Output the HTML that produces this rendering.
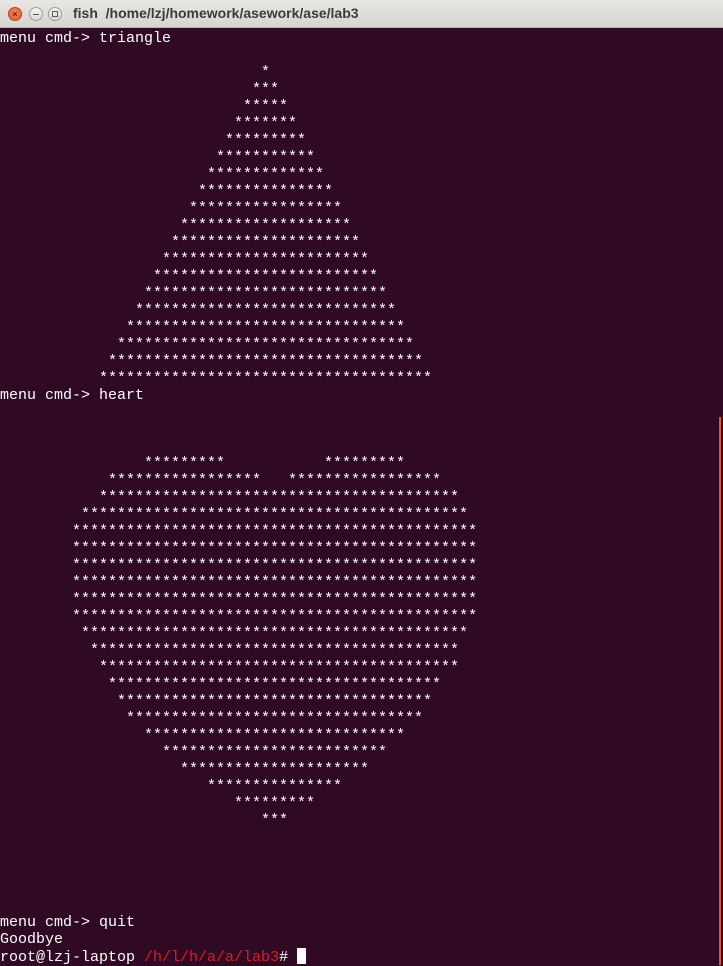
<!DOCTYPE html>
<html><head><meta charset="utf-8"><style>
html,body{margin:0;padding:0;width:723px;height:965px;overflow:hidden;background:#300a24;}
#tb{position:absolute;left:0;top:0;width:723px;height:28px;background:linear-gradient(#e8e7e3,#d6d5d0);border-bottom:1px solid #b8b6b0;box-sizing:border-box;}
.btn{position:absolute;top:7px;width:14px;height:14px;border-radius:50%;box-sizing:border-box;}
#close{left:8px;background:radial-gradient(circle at 50% 40%,#f58a5f,#e2531f);border:1px solid #b8451c;color:#6a1e06;font:bold 9px "Liberation Sans",sans-serif;text-align:center;line-height:12px;}
#min{left:29px;background:linear-gradient(#f5f4f2,#d8d7d3);border:1px solid #9e9d99;}
#max{left:48px;background:linear-gradient(#f5f4f2,#d8d7d3);border:1px solid #9e9d99;}
#min:after{content:"";position:absolute;left:3px;top:6px;width:6px;height:1px;background:#5a5a58;}
#max:after{content:"";position:absolute;left:3px;top:3px;width:4px;height:4px;border:1px solid #5a5a58;}
#title{position:absolute;left:73px;top:5px;font:bold 14px "Liberation Sans",sans-serif;color:#3c3b37;white-space:pre;}
#term{position:absolute;left:0;top:30px;font:15px/17px "Liberation Mono",monospace;color:#fff;}
.l{height:17px;white-space:pre;}
.r{color:#e01b1b;}
#cur{display:inline-block;width:9px;height:16px;background:#fff;vertical-align:-3px;}
#sb{position:absolute;left:719px;top:417px;width:2px;height:548px;background:#e95420;}
</style></head><body>
<div id="tb"><div class="btn" id="close">×</div><div class="btn" id="min"></div><div class="btn" id="max"></div><div id="title">fish  /home/lzj/homework/asework/ase/lab3</div></div>
<div id="term">
<div class="l">menu cmd-&gt; triangle</div>
<div class="l"></div>
<div class="l" style="padding-left:261px">*</div>
<div class="l" style="padding-left:252px">***</div>
<div class="l" style="padding-left:243px">*****</div>
<div class="l" style="padding-left:234px">*******</div>
<div class="l" style="padding-left:225px">*********</div>
<div class="l" style="padding-left:216px">***********</div>
<div class="l" style="padding-left:207px">*************</div>
<div class="l" style="padding-left:198px">***************</div>
<div class="l" style="padding-left:189px">*****************</div>
<div class="l" style="padding-left:180px">*******************</div>
<div class="l" style="padding-left:171px">*********************</div>
<div class="l" style="padding-left:162px">***********************</div>
<div class="l" style="padding-left:153px">*************************</div>
<div class="l" style="padding-left:144px">***************************</div>
<div class="l" style="padding-left:135px">*****************************</div>
<div class="l" style="padding-left:126px">*******************************</div>
<div class="l" style="padding-left:117px">*********************************</div>
<div class="l" style="padding-left:108px">***********************************</div>
<div class="l" style="padding-left:99px">*************************************</div>
<div class="l">menu cmd-&gt; heart</div>
<div class="l"></div>
<div class="l"></div>
<div class="l"></div>
<div class="l" style="padding-left:144px">*********           *********</div>
<div class="l" style="padding-left:108px">*****************   *****************</div>
<div class="l" style="padding-left:99px">****************************************</div>
<div class="l" style="padding-left:81px">*******************************************</div>
<div class="l" style="padding-left:72px">*********************************************</div>
<div class="l" style="padding-left:72px">*********************************************</div>
<div class="l" style="padding-left:72px">*********************************************</div>
<div class="l" style="padding-left:72px">*********************************************</div>
<div class="l" style="padding-left:72px">*********************************************</div>
<div class="l" style="padding-left:72px">*********************************************</div>
<div class="l" style="padding-left:81px">*******************************************</div>
<div class="l" style="padding-left:90px">*****************************************</div>
<div class="l" style="padding-left:99px">****************************************</div>
<div class="l" style="padding-left:108px">*************************************</div>
<div class="l" style="padding-left:117px">***********************************</div>
<div class="l" style="padding-left:126px">*********************************</div>
<div class="l" style="padding-left:144px">*****************************</div>
<div class="l" style="padding-left:162px">*************************</div>
<div class="l" style="padding-left:180px">*********************</div>
<div class="l" style="padding-left:207px">***************</div>
<div class="l" style="padding-left:234px">*********</div>
<div class="l" style="padding-left:261px">***</div>
<div class="l"></div>
<div class="l"></div>
<div class="l"></div>
<div class="l"></div>
<div class="l"></div>
<div class="l">menu cmd-&gt; quit</div>
<div class="l">Goodbye</div>
<div class="l">root@lzj-laptop <span class="r">/h/l/h/a/a/lab3</span># <span id="cur"></span></div>
</div>
<div id="sb"></div>
</body></html>
